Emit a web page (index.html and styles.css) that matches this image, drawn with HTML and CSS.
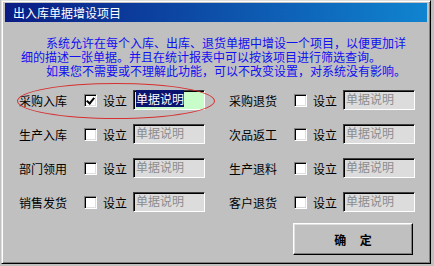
FILE: index.html
```html
<!DOCTYPE html>
<html lang="zh-CN">
<head>
  <meta charset="UTF-8">
  <title>出入库单据增设项目</title>
  <link rel="stylesheet" href="styles.css">
</head>
<body>
  <div class="window">
    <div class="titlebar">出入库单据增设项目</div>

    <div class="note">
      <div class="line indent">系统允许在每个入库、出库、退货单据中增设一个项目，以便更加详</div>
      <div class="line">细的描述一张单据。并且在统计报表中可以按该项目进行筛选查询。</div>
      <div class="line indent">如果您不需要或不理解此功能，可以不改变设置，对系统没有影响。</div>
    </div>

    <div class="form">
      <span class="mark"></span>

      <div class="field">
        <span class="label">采购入库</span>
        <span class="check checked"></span>
        <span class="setup">设立</span>
        <span class="input active"><span class="sel">单据说明</span></span>
      </div>
      <div class="field">
        <span class="label">采购退货</span>
        <span class="check"></span>
        <span class="setup">设立</span>
        <span class="input">单据说明</span>
      </div>

      <div class="field">
        <span class="label">生产入库</span>
        <span class="check"></span>
        <span class="setup">设立</span>
        <span class="input">单据说明</span>
      </div>
      <div class="field">
        <span class="label">次品返工</span>
        <span class="check"></span>
        <span class="setup">设立</span>
        <span class="input">单据说明</span>
      </div>

      <div class="field">
        <span class="label">部门领用</span>
        <span class="check"></span>
        <span class="setup">设立</span>
        <span class="input">单据说明</span>
      </div>
      <div class="field">
        <span class="label">生产退料</span>
        <span class="check"></span>
        <span class="setup">设立</span>
        <span class="input">单据说明</span>
      </div>

      <div class="field">
        <span class="label">销售发货</span>
        <span class="check"></span>
        <span class="setup">设立</span>
        <span class="input">单据说明</span>
      </div>
      <div class="field">
        <span class="label">客户退货</span>
        <span class="check"></span>
        <span class="setup">设立</span>
        <span class="input">单据说明</span>
      </div>

      <button class="ok">确&nbsp;&nbsp;&nbsp;&nbsp;&nbsp;定</button>
    </div>
  </div>
</body>
</html>
```

FILE: styles.css
```css
body {
  margin: 0;
  background-color: #c0c0c0;
  font-family: "Noto Sans CJK SC", "DejaVu Sans", sans-serif;
  font-size: 12px;
  color: #000;
}
.window {
  box-sizing: border-box;
  width: 430px;
  height: 264px;
  margin-left: 1px;
  background-color: #c0c0c0;
  border-top: 1px solid #dfdfdf;
  border-left: 1px solid #dfdfdf;
  border-right: 1px solid #000;
  border-bottom: 1px solid #000;
  box-shadow: inset 1px 1px 0 #fff, inset -1px -1px 0 #808080;
  padding: 2px;
}
.titlebar {
  height: 19px;
  margin: 0 1px;
  padding-left: 8px;
  line-height: 19px;
  color: #fff;
  font-size: 12px;
  background: linear-gradient(to right, #0a1c84, #1084d0);
}
.note {
  margin-top: 14px;
  padding-left: 17px;
  color: #1010f0;
  line-height: 14px;
  white-space: nowrap;
}
.line.indent {
  padding-left: 25px;
}
.form {
  position: relative;
  margin-top: 5px;
  padding-left: 15px;
  display: grid;
  grid-template-columns: 210px 210px;
  grid-auto-rows: 34px;
}
.mark {
  position: absolute;
  left: 13px;
  top: 0;
  width: 198px;
  height: 36px;
  border: 1px solid #d83030;
  border-radius: 50%;
  box-sizing: border-box;
}
.field {
  display: flex;
  align-items: center;
}
.label {
  width: 48px;
}
.check {
  position: relative;
  box-sizing: border-box;
  width: 13px;
  height: 13px;
  margin-left: 17px;
  background-color: #fff;
  border-top: 1px solid #808080;
  border-left: 1px solid #808080;
  border-right: 1px solid #fff;
  border-bottom: 1px solid #fff;
  box-shadow: inset 1px 1px 0 #000, inset -1px -1px 0 #dfdfdf;
}
.check.checked::after {
  content: "";
  position: absolute;
  left: 3px;
  top: 1px;
  width: 3px;
  height: 6px;
  border-right: 2px solid #000;
  border-bottom: 2px solid #000;
  transform: rotate(40deg);
}
.setup {
  margin-left: 6px;
}
.input {
  box-sizing: border-box;
  width: 72px;
  height: 20px;
  margin-left: 6px;
  padding-left: 2px;
  line-height: 16px;
  color: #8c8c8c;
  background-color: #dcdcdc;
  border-top: 1px solid #404040;
  border-left: 1px solid #404040;
  border-right: 1px solid #fff;
  border-bottom: 1px solid #fff;
  box-shadow: inset 1px 1px 0 #000;
}
.input.active {
  background-color: #c8fcc8;
  color: #fff;
}
.sel {
  background-color: #0a1470;
}
.ok {
  grid-column: 2;
  width: 120px;
  height: 32px;
  margin: 4px 0 0 64px;
  padding: 0;
  font-family: inherit;
  font-size: 12px;
  font-weight: bold;
  color: #000;
  background-color: #c0c0c0;
  border-top: 1px solid #fff;
  border-left: 1px solid #fff;
  border-right: 1px solid #000;
  border-bottom: 1px solid #000;
  box-shadow: inset -1px -1px 0 #808080, inset 1px 1px 0 #dfdfdf;
}
```
